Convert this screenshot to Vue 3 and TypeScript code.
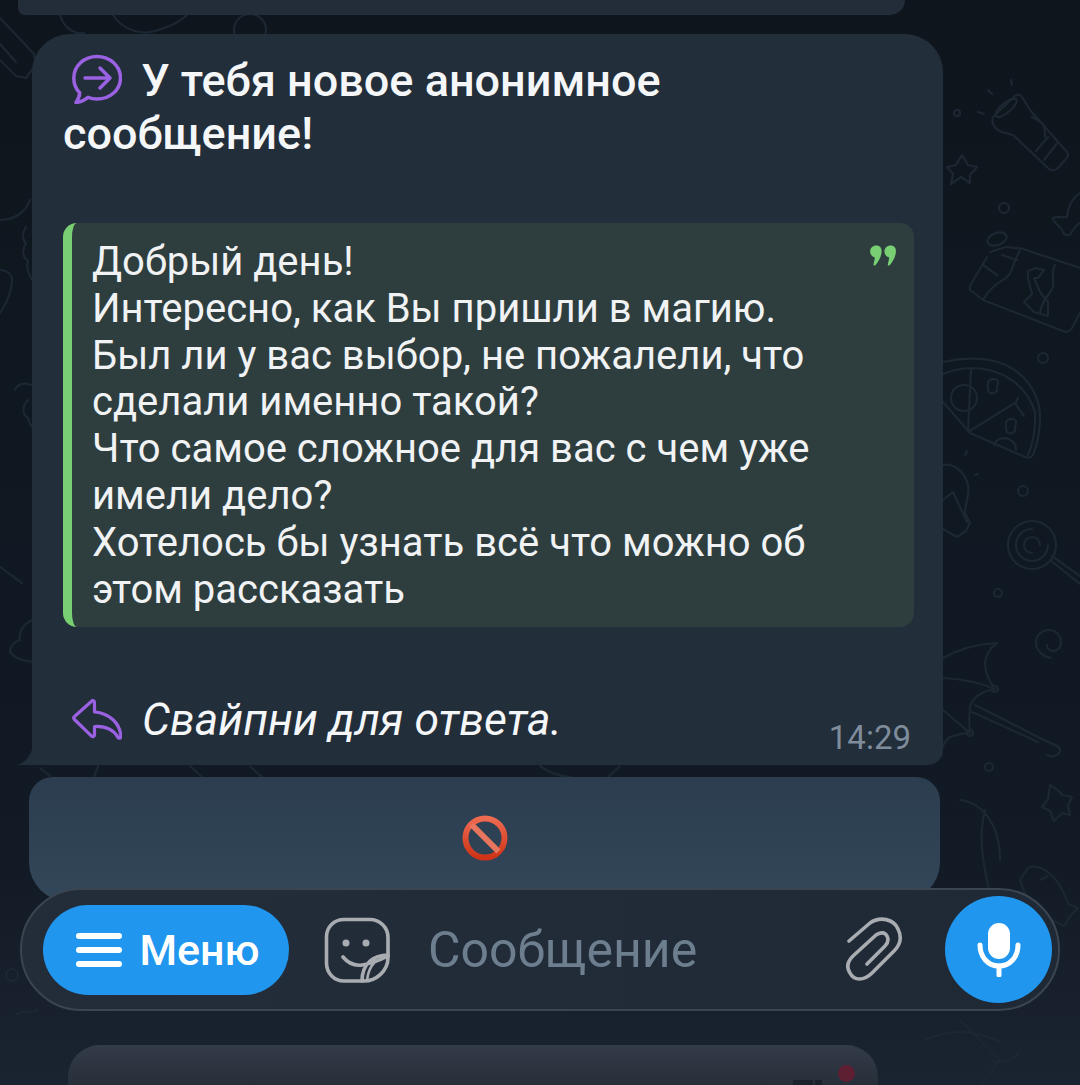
<script setup lang="ts">
const quoteLines: string[] = [
  'Добрый день!',
  'Интересно, как Вы пришли в магию.',
  'Был ли у вас выбор, не пожалели, что',
  'сделали именно такой?',
  'Что самое сложное для вас с чем уже',
  'имели дело?',
  'Хотелось бы узнать всё что можно об',
  'этом рассказать',
]
</script>

<template>
  <div class="screen">
    <!-- doodle wallpaper -->
    <svg class="doodles" viewBox="0 0 1080 1085" fill="none" stroke="#1c2732" stroke-width="2.2" stroke-linecap="round" stroke-linejoin="round">
      <!-- top left -->
      <path d="M0 18l34 36 2 10-10 14-10-2L0 60M0 44l16 18" />
      <path d="M60 15c4 14 16 20 24 18M113 15c10 16 30 20 42 16 14-4 26-10 32-16" />
      <circle cx="250" cy="30" r="16" />
      <!-- flashlight -->
      <path d="M994 116l21-20c3-2 5-2 7 1l8 13 37 42c2 3 1 5-1 7l-8 9c-3 3-6 3-9 1l-36-34-11-3c-3-1-6-3-8-6-2-4-2-8 0-10z" />
      <path d="M996 112c5-8 14-14 20-13 3 3-6 14-16 18-3 1-5-2-4-5zM1036 151l12-14M1044 160l14-18M1032 117l10 6c3 3 3 9 3 14" />
      <path d="M988 90l4 4M978 112l6 2M1011 80l1 5" />
      <path d="M962 155l6 10 9 2-7 8v8l-9-6-10 7 2-10-6-7 9-2z" />
      <circle cx="957" cy="113" r="3" />
      <circle cx="1004" cy="208" r="5" />
      <path d="M1080 193c-8 5-12 14-13 24-5 1-12-1-14 1-1 3 7 8 9 12 1 4 4 6 7 5 3-1 4-8 11-12" />
      <!-- chocolate -->
      <path d="M987 257l-17 29c-1 3 0 5 3 6l10 8 80 31c4 2 7 0 9-3l8-15" />
      <path d="M990 252l16-5 17 2 57 19M983 300c6-10 12-16 20-20 6-3 8-8 10-14 2-6 5-12 8-18M983 265l14 10M1002 255l15 5" />
      <path d="M1055 265c-4 6-1 14-2 22-2 6-12 14-13 26M1028 271l8-3 8 2-6 8-4 0 6 14 8 10 0 14-14-4-10-10 8-8-4-16z" />
      <ellipse cx="997" cy="239" rx="10" ry="6" transform="rotate(-20 997 239)" />
      <!-- pizza -->
      <path d="M943 362c18-4 34-4 47-2 30 6 50 30 50 57 0 14-3 28-7 38-2 3-5 3-8 2l-55-24-27-31" />
      <path d="M943 374c10-4 18-6 28-6 32 0 56 18 64 44M1028 455c5-12 8-24 7-43M971 368l-3 64 47-29M1018 398c-2 4-3 8-3 5l9 13" />
      <circle cx="964" cy="398" r="13" />
      <path d="M988 382c3-4 8-4 10-1 1 4-2 5-1 8s-5 6-8 3c-2-3-1-4-1-10zM1006 422c3-4 8-4 10-1 1 4-2 5-1 8s-5 6-8 3c-2-3-1-4-1-10zM994 445c2-7 12-9 18-4 3 2 4 5 4 9" />
      <circle cx="1043" cy="358" r="5" />
      <!-- bulb -->
      <path d="M943 465c10-2 22 6 25 20 2 10-3 18-3 28l5 10-4 8-9 6-14-8-5-10M943 500l10-8 14 30" />
      <path d="M965 455l2-4M975 475l3-1" />
      <!-- lollipop -->
      <circle cx="1032" cy="545" r="24" />
      <path d="M1032 529a16 16 0 1 0 16 16M1040 545a8 8 0 1 0-8 8" />
      <path d="M1050 560l30 24M1052 556l28 20" />
      <circle cx="1023" cy="491" r="5" />
      <circle cx="998" cy="593" r="4" />
      <!-- swirl -->
      <path d="M1051 658c-9-2-15-8-15-15 0-8 6-13 13-13s12 6 12 12-4 9-8 9-6-3-6-6" />
      <!-- umbrella -->
      <path d="M943 658c14-8 34-14 54-15-8 6-12 14-12 20 0 10 4 18 10 26-14-6-34-10-52-11M995 689c-12 2-22 8-25 18-1 8-1 18 0 26M943 710l27 23c-8 0-14 2-20 4-4 3-6 6-7 10" />
      <path d="M975 705l63 32c10 6 22 8 22 13 0 5-8 8-13 5M972 712l66 30" />
      <circle cx="995" cy="689" r="3" />
      <circle cx="970" cy="733" r="3" />
      <circle cx="989" cy="767" r="4" />
      <!-- candy and leaves -->
      <path d="M1050 785c6 4 10 6 12 10l10 2-4 8 2 10-8-2-8 8-4-10-8-4 6-8z" />
      <path d="M960 800c20 2 40 22 40 60M985 810c-8 30 0 60 4 80" />
      <path d="M1028 868c14-6 32 10 40 36l10 4-8 8-6 10-8-4c-14-4-30-20-36-42zM1040 880l8-4" />
      <path d="M925 1040c30-14 55-8 75 2M960 1020l40 40-20 25M990 1060c12 4 24 2 30-10" />
      <!-- left edge -->
      <path d="M0 220c14 0 26-8 30-20M0 270c6 0 12 4 12 10 0 12-6 24-12 33" />
      <path d="M26 227c-4 6-4 12 0 16-4 6-4 14 2 18-2 6 0 12 4 19M28 400c-6 6-6 14 0 18 1 4 2 6 4 9M15 390c2-6 10-8 16-5" />
      <path d="M0 567l22 16M32 620c-8 4-14 12-12 20-6 2-10 6-10 12 6 8 14 8 22 10" />
      <!-- between bubbles -->
      <path d="M40 768l10 8M98 766l-4 11M190 766l12 11M250 766c4 4 8 8 12 11M540 766c8 6 20 10 30 11M620 766l-12 11" />
      <!-- lower left -->
      <circle cx="12" cy="975" r="6" />
      <path d="M16 1015c8-8 14 2 22-6" />
    </svg>

    <div class="top-bubble"></div>

    <div class="message">
      <svg class="tail" viewBox="0 0 16 22"><path d="M16 0C15.500 12 8 20 0 22H16z" fill="#222e3a" /></svg>
      <div class="title">
        <svg class="title-icon" viewBox="0 0 50 50" fill="none" stroke="#9a62e2" stroke-width="3.500" stroke-linecap="round" stroke-linejoin="round">
          <path d="M25 2.500c13 0 23.500 9.500 23.500 21.500S38 45 25 45c-3.500 0-6.500-.7-9-1.700-3 2.700-7 4.700-12 5.200 2.300-3 3.500-5.700 3.700-9.800C3.900 35 1.800 29.800 1.800 24 1.800 12 12 2.500 25 2.500z" />
          <path d="M13 24h25M28 14l10 10-10 10" />
        </svg>
        У тебя новое анонимное сообщение!
      </div>

      <div class="quote">
        <div v-for="line in quoteLines" :key="line" class="quote-line">{{ line }}</div>
        <svg class="quote-mark" viewBox="0 0 28 22" fill="#79d073">
          <path d="M6.500 0.500c3.600 0 5.800 2.500 5.500 6.500-.4 5.500-3.200 10.500-6.500 14.200-.8.700-2.200.2-2-.9.500-2.300 1.200-4.700 1.500-7.300C2.300 12.500 0 10 0 6.800 0 3.200 2.800.5 6.500.5z" />
          <path d="M21.500 0.500c3.600 0 5.800 2.500 5.500 6.500-.4 5.500-3.200 10.500-6.500 14.200-.8.700-2.200.2-2-.9.500-2.300 1.200-4.700 1.500-7.300-2.700-.5-5-3-5-6.200 0-3.600 2.800-6.300 6.500-6.300z" />
        </svg>
      </div>

      <div class="footer">
        <div class="swipe">
          <svg class="swipe-icon" viewBox="0 0 50 42" fill="none" stroke="#9a62e2" stroke-width="3.200" stroke-linecap="round" stroke-linejoin="round">
            <path d="M22 2c-.8-.5-1.700-.5-2.400.2L2.500 17.500c-1 1-1 2 0 3l17.100 16.600c1.200 1 2.900.4 2.900-1.300v-8.300c9.500-.5 18.500 2.500 23.500 10.800 1 1.600 3 1 2.900-1-1-13-11-23-26.400-24.500V4c0-1-.1-1.500-.5-2z" />
          </svg>
          <span class="swipe-text">Свайпни для ответа.</span>
        </div>
        <span class="time">14:29</span>
      </div>
    </div>

    <div class="keyboard-button">
      <svg class="no-entry" viewBox="0 0 46 46" fill="none">
        <defs>
          <linearGradient id="noEntryRing" x1="0" y1="0" x2="0" y2="1">
            <stop offset="0" stop-color="#ee6a50" />
            <stop offset="1" stop-color="#cf3317" />
          </linearGradient>
        </defs>
        <circle cx="23" cy="23" r="19.500" stroke="url(#noEntryRing)" stroke-width="6" />
        <path d="M9.500 9.500l27 27" stroke="#e8765f" stroke-width="6" />
      </svg>
    </div>

    <div class="input-bar">
      <div class="menu-button">
        <svg class="menu-icon" viewBox="0 0 46 34" fill="#fff">
          <rect x="0" y="0" width="46" height="6" rx="3" />
          <rect x="0" y="14" width="46" height="6" rx="3" />
          <rect x="0" y="28" width="46" height="6" rx="3" />
        </svg>
        <span>Меню</span>
      </div>
      <svg class="sticker-icon" viewBox="0 0 66 66" fill="none" stroke="#a9adb2" stroke-width="3.600" stroke-linecap="round" stroke-linejoin="round">
        <path d="M20 2.500h26c10 0 18 8 18 18v20C64 54 52 64 40 64H20C10 64 2.500 56 2.500 46V20C2.500 10 10 2.500 20 2.500z" />
        <path d="M19 40c5 6 12 9 19 8 8-1 16-4 26-9M64 38c-14 0-26 8-26 26" />
        <path d="M50 46c-4 4-6 10-7 17" stroke-width="2.600" />
        <circle cx="22" cy="26" r="3.500" fill="#a9adb2" stroke="none" />
        <circle cx="42" cy="26" r="3.500" fill="#a9adb2" stroke="none" />
      </svg>
      <span class="placeholder">Сообщение</span>
      <svg class="clip-icon" viewBox="0 0 58 66" fill="none" stroke="#a9adb2" stroke-width="3.600" stroke-linecap="round" stroke-linejoin="round">
        <path d="M3 24L24 6C34-1 48 2 52 12c4 8 2 16-4 22L26 56c-8 8-18 8-22 0-4-6-2-12 3-17l23-21c4-3 9-3 11 1s1 7-2 10L21 47" />
      </svg>
      <div class="mic-button">
        <svg class="mic-icon" viewBox="0 0 44 54">
          <rect x="11" y="0" width="22" height="36" rx="11" fill="#fff" />
          <path d="M3 22c0 12 8 21 19 21s19-9 19-21" fill="none" stroke="#fff" stroke-width="5" stroke-linecap="round" />
          <path d="M22 43v9" fill="none" stroke="#fff" stroke-width="5" stroke-linecap="round" />
        </svg>
      </div>
    </div>

    <div class="next-bubble">
      <span class="red-dot"></span>
      <span class="smudge"></span>
      <span class="smudge small"></span>
    </div>
  </div>
</template>

<style>
html,
body {
  margin: 0;
  background: #0e161e;
}
</style>

<style scoped>
.screen {
  position: relative;
  display: flex;
  flex-direction: column;
  width: 1080px;
  height: 1085px;
  overflow: hidden;
  background: linear-gradient(180deg, #0e151c 0%, #101923 60%, #121b25 80%, #1a2330 100%);
  font-family: Roboto, "Liberation Sans", sans-serif;
  color: #f4f6f8;
}

.doodles {
  position: absolute;
  top: 0;
  left: 0;
  width: 1080px;
  height: 1085px;
}

.top-bubble {
  position: relative;
  flex-shrink: 0;
  width: 887px;
  height: 15px;
  margin-left: 18px;
  background: #222d39;
  border-radius: 0 0 30px 14px;
}

.message {
  position: relative;
  flex-shrink: 0;
  display: flex;
  flex-direction: column;
  box-sizing: border-box;
  width: 911px;
  height: 731px;
  margin: 19px 0 0 32px;
  padding: 20px 29px 0 30px;
  background: #222e3a;
  border-radius: 38px 38px 15px 0;
}

.tail {
  position: absolute;
  left: -15px;
  bottom: 0;
  width: 16px;
  height: 22px;
}

.title {
  font-size: 45px;
  font-weight: 500;
  line-height: 53px;
  height: 106px;
  padding-left: 1px;
  width: 640px;
}

.title-icon {
  width: 50px;
  height: 50px;
  margin: 0 8px 0 9px;
  vertical-align: -8px;
}

.quote {
  position: relative;
  box-sizing: border-box;
  width: 851px;
  height: 404px;
  margin: 63px 0 0 1px;
  padding: 16px 0 0 20px;
  background: #2e3e3f;
  border-left: 9px solid #79d073;
  border-radius: 14px;
}

.quote-line {
  font-size: 40px;
  line-height: 46.800px;
  color: #f0f2f4;
  white-space: nowrap;
}

.quote-mark {
  position: absolute;
  top: 22px;
  right: 17px;
  width: 27px;
  height: 21px;
}

.footer {
  display: flex;
  justify-content: space-between;
  align-items: flex-end;
  margin-top: 68px;
  padding-right: 3px;
}

.swipe {
  display: flex;
  align-items: center;
  padding-left: 10px;
  margin-bottom: 11px;
}

.swipe-icon {
  width: 50px;
  height: 42px;
  margin-right: 20px;
}

.swipe-text {
  font-size: 44.500px;
  font-style: italic;
  line-height: 50px;
}

.time {
  font-size: 33px;
  line-height: 36px;
  color: #7e8c9b;
}

.keyboard-button {
  position: relative;
  flex-shrink: 0;
  display: flex;
  justify-content: center;
  box-sizing: border-box;
  width: 911px;
  height: 125px;
  margin: 12px 0 0 29px;
  padding-top: 38px;
  background: linear-gradient(180deg, #2b3d4f 0%, #33475a 100%);
  border-radius: 24px 24px 40px 40px;
}

.no-entry {
  width: 46px;
  height: 46px;
}

.input-bar {
  position: relative;
  flex-shrink: 0;
  display: flex;
  align-items: center;
  box-sizing: border-box;
  width: 1040px;
  height: 123px;
  margin: -14px 0 0 20px;
  padding: 0 6px 0 21px;
  background: linear-gradient(90deg, #232d3a 0%, #222c39 50%, #1e2935 100%);
  border: 2px solid #3b4552;
  border-radius: 62px;
}

.menu-button {
  flex-shrink: 0;
  display: flex;
  align-items: center;
  justify-content: center;
  gap: 17px;
  box-sizing: border-box;
  width: 246px;
  height: 90px;
  padding-left: 4px;
  background: #2196ee;
  border-radius: 45px;
  font-size: 43px;
  font-weight: 500;
  color: #fff;
}

.menu-icon {
  width: 46px;
  height: 34px;
}

.sticker-icon {
  flex-shrink: 0;
  width: 66px;
  height: 66px;
  margin-left: 35px;
}

.placeholder {
  margin-left: 38px;
  font-size: 50px;
  color: #6d7e8f;
}

.clip-icon {
  flex-shrink: 0;
  width: 58px;
  height: 66px;
  margin-left: auto;
}

.mic-button {
  flex-shrink: 0;
  display: flex;
  align-items: center;
  justify-content: center;
  width: 107px;
  height: 107px;
  margin-left: 41px;
  background: #2196ee;
  border-radius: 50%;
}

.mic-icon {
  width: 44px;
  height: 54px;
}

.next-bubble {
  position: relative;
  flex-shrink: 0;
  box-sizing: border-box;
  width: 810px;
  height: 60px;
  margin: 34px 0 0 68px;
  background: linear-gradient(180deg, #323b47 0%, #262e39 70%);
  border-radius: 32px 32px 0 0;
}

.red-dot {
  position: absolute;
  top: 20px;
  right: 23px;
  width: 17px;
  height: 17px;
  background: #5f1f33;
  border-radius: 50%;
}

.smudge {
  position: absolute;
  top: 35px;
  left: 725px;
  width: 20px;
  height: 6px;
  background: #1b222b;
}

.smudge.small {
  left: 747px;
  width: 7px;
}
</style>
